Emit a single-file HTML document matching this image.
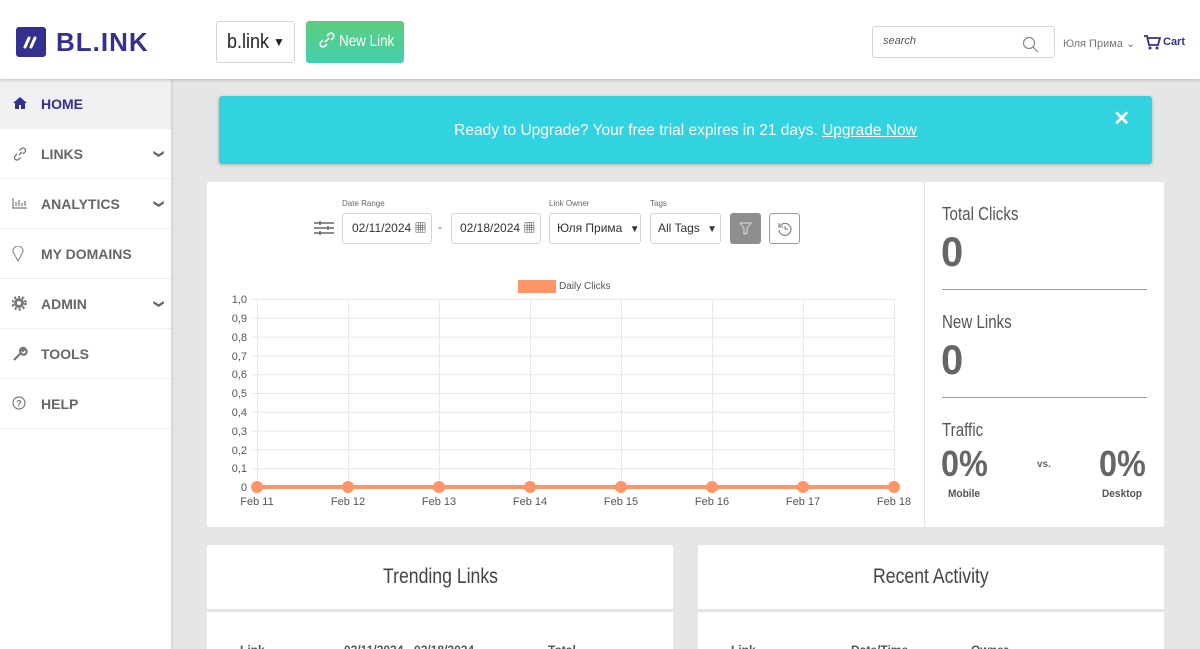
<!DOCTYPE html>
<html><head><meta charset="utf-8"><style>
*{box-sizing:border-box;margin:0;padding:0}
html,body{overflow:hidden}
body{width:1200px;height:649px;background:#e6e6e6;font-family:"Liberation Sans","Noto Sans CJK SC",sans-serif;position:relative;color:#555}
.a{position:absolute}
.n{display:inline-block;transform:scaleX(.84);transform-origin:left;white-space:nowrap}
.nc{display:inline-block;transform:scaleX(.84);transform-origin:center;white-space:nowrap}
.hdr{left:0;top:0;width:1200px;height:79px;background:#fff;box-shadow:0 1px 3px rgba(0,0,0,.2);z-index:2}
.side{left:0;top:79px;width:171px;height:570px;background:#fff;box-shadow:1px 0 3px rgba(0,0,0,.12)}
.it{position:absolute;left:0;width:171px;height:50px;border-bottom:1px solid #eee;font-weight:bold;font-size:14px;color:#666;line-height:50px;padding-left:41px}
.it svg{position:absolute;left:12px;top:17px}
.chev{position:absolute;right:9px;top:0;font-size:10px;color:#666}
.box{background:#fff;border:1px solid #d6d6d6;border-radius:3px;height:31px;font-size:12px;color:#333;line-height:29px;white-space:nowrap}
.lbl{font-size:8px;color:#666}
</style></head><body>
<div class="a hdr">
  <svg class="a" style="left:16px;top:27px" width="30" height="30"><rect width="30" height="30" rx="3" fill="#33308f"/><path d="M9 20l4-9M15 20l4-9" stroke="#fff" stroke-width="3" stroke-linecap="round"/></svg>
  <div class="a" style="left:56px;top:27px;font-size:26px;font-weight:bold;color:#33308f;letter-spacing:1px">BL.INK</div>
  <div class="a box" style="left:216px;top:21px;width:79px;height:42px;line-height:40px;font-size:20px;padding-left:10px;color:#222"><span class="n" style="transform:scaleX(.9)">b.link</span><span style="font-size:12px;position:absolute;left:56px">▼</span></div>
  <div class="a" style="left:306px;top:21px;width:98px;height:42px;border-radius:3px;background:linear-gradient(#5ccd7e,#45cfac);color:#fff;font-size:16px;line-height:42px;padding-left:13px;white-space:nowrap"><svg width="16" height="16" style="vertical-align:-2px"><path d="M6 10l4-4M4 8l-2 2a2.8 2.8 0 004 4l2-2M12 8l2-2a2.8 2.8 0 00-4-4L8 4" fill="none" stroke="#fff" stroke-width="1.6"/></svg> <span class="n">New Link</span></div>
  <div class="a box" style="left:872px;top:26px;width:183px;height:32px;font-size:11px;font-style:italic;color:#555;padding-left:10px">search
    <svg class="a" style="left:149px;top:9px" width="18" height="18"><circle cx="7" cy="7" r="5.5" fill="none" stroke="#888" stroke-width="1.2"/><path d="M11 11l5 5" stroke="#888" stroke-width="1.2"/></svg></div>
  <div class="a" style="left:1063px;top:37px;font-size:11px;color:#777">Юля Прима ⌄</div>
  <svg class="a" style="left:1143px;top:34px" width="18" height="16"><path d="M1 2h3l2 9h9l2-7H5" fill="none" stroke="#33308f" stroke-width="1.8"/><circle cx="7" cy="14" r="1.5" fill="#33308f"/><circle cx="14" cy="14" r="1.5" fill="#33308f"/></svg>
  <div class="a" style="left:1163px;top:36px;font-size:11px;font-weight:bold;color:#33308f">Cart</div>
</div>
<div class="a side">
  <div class="it" style="top:0;background:#f0f0f0;color:#33308f"><svg width="16" height="14"><path d="M8 1L1 7h2v6h4V9h2v4h4V7h2z" fill="#33308f"/></svg>HOME</div>
  <div class="it" style="top:50px"><svg width="16" height="16"><path d="M7 9l3-3M5 8l-2 2a2.5 2.5 0 003.5 3.5l2-2M11 8l2-2a2.5 2.5 0 00-3.5-3.5l-2 2" fill="none" stroke="#777" stroke-width="1.3"/></svg>LINKS<span class="chev">❯</span></div>
  <div class="it" style="top:100px"><svg width="16" height="14"><path d="M1 2v10h14M4 10V6M7 10V4M10 10V7M13 10V5" stroke="#777" stroke-width="1.2" fill="none"/></svg>ANALYTICS<span class="chev">❯</span></div>
  <div class="it" style="top:150px"><svg width="16" height="16"><path d="M6 15C3 9 1 7 1 5a5 5 0 0110 0c0 2-2 4-5 10z" fill="none" stroke="#888" stroke-width="1.1"/></svg>MY DOMAINS</div>
  <div class="it" style="top:200px"><svg width="16" height="16"><circle cx="7" cy="7" r="5" fill="#777"/><circle cx="7" cy="7" r="6.5" fill="none" stroke="#777" stroke-width="2.5" stroke-dasharray="2.2 2"/><circle cx="7" cy="7" r="2" fill="#fff"/></svg>ADMIN<span class="chev">❯</span></div>
  <div class="it" style="top:250px"><svg width="16" height="16"><path d="M2 14l7-7M9 7a3 3 0 104-4l-2 2-1-1 2-2a3 3 0 00-3 5" stroke="#777" stroke-width="2.2" fill="none"/></svg>TOOLS</div>
  <div class="it" style="top:300px"><svg width="16" height="16"><circle cx="7" cy="7" r="6" fill="none" stroke="#777" stroke-width="1.2"/><text x="7" y="10.5" font-size="9" text-anchor="middle" fill="#777" font-family="Liberation Sans">?</text></svg>HELP</div>
</div>
<style>.it .chev{transform:rotate(90deg);display:inline-block;height:50px;line-height:50px}</style>

<div class="a" style="left:219px;top:96px;width:933px;height:68px;background:#31d3e0;border-radius:3px;box-shadow:0 1px 3px rgba(0,0,0,.25);color:#fff;font-size:15.5px;text-align:center;line-height:70px;white-space:nowrap">Ready to Upgrade? Your free trial expires in 21 days. <u>Upgrade Now</u>
  <span class="a" style="right:22px;top:-12px;font-size:20px;font-weight:bold">✕</span></div>

<div class="a" style="left:207px;top:182px;width:957px;height:345px;background:#fff;border-radius:2px"></div>
<div class="a" style="left:924px;top:182px;width:1px;height:345px;background:#e3e3e3"></div>

<svg class="a" style="left:314px;top:219px" width="20" height="18"><path d="M0 4h20M0 9h20M0 14h20" stroke="#666" stroke-width="1.5"/><path d="M6 2v4M14 7v4M6 12v4" stroke="#666" stroke-width="1.5"/></svg>
<div class="a lbl" style="left:342px;top:199px">Date Range</div>
<div class="a box" style="left:342px;top:213px;width:90px;padding-left:9px">02/11/2024 <span style="font-size:12px">▦</span></div>
<div class="a" style="left:438px;top:220px;font-size:12px">-</div>
<div class="a box" style="left:451px;top:213px;width:90px;padding-left:8px">02/18/2024 <span style="font-size:12px">▦</span></div>
<div class="a lbl" style="left:549px;top:199px">Link Owner</div>
<div class="a box" style="left:549px;top:213px;width:92px;padding-left:7px">Юля Прима <span style="font-size:10px;margin-left:4px">▼</span></div>
<div class="a lbl" style="left:650px;top:199px">Tags</div>
<div class="a box" style="left:650px;top:213px;width:71px;padding-left:7px">All Tags <span style="font-size:10px;margin-left:4px">▼</span></div>
<div class="a" style="left:730px;top:213px;width:31px;height:31px;background:#8e8e8e;border-radius:3px"><svg style="margin:9px 0 0 9px" width="13" height="13"><path d="M1 1h11L8 6v5l-3 1V6z" fill="none" stroke="#ddd" stroke-width="1"/></svg></div>
<div class="a" style="left:769px;top:213px;width:31px;height:31px;border:1px solid #999;border-radius:3px"><svg style="margin:7px 0 0 7px" width="16" height="16"><path d="M3 5a6 6 0 11-1 4" fill="none" stroke="#777" stroke-width="1.1"/><path d="M2 2v4h4" fill="none" stroke="#777" stroke-width="1.1"/><path d="M8 5v3h3" fill="none" stroke="#777"/></svg></div>

<div class="a" style="left:518px;top:280px;width:38px;height:13px;background:#ff9566"></div>
<div class="a" style="left:559px;top:281px;font-size:10px;color:#555">Daily Clicks</div>

<svg class="a" style="left:0;top:0" width="1200" height="649" font-family="Liberation Sans" font-size="11" fill="#555">
<g stroke="#e8e8e8" stroke-width="1">
<line x1="252" y1="299.5" x2="894" y2="299.5"/><line x1="252" y1="318.3" x2="894" y2="318.3"/><line x1="252" y1="337.1" x2="894" y2="337.1"/><line x1="252" y1="355.9" x2="894" y2="355.9"/><line x1="252" y1="374.7" x2="894" y2="374.7"/><line x1="252" y1="393.5" x2="894" y2="393.5"/><line x1="252" y1="412.3" x2="894" y2="412.3"/><line x1="252" y1="431.1" x2="894" y2="431.1"/><line x1="252" y1="449.9" x2="894" y2="449.9"/><line x1="252" y1="468.7" x2="894" y2="468.7"/>
<line x1="257.5" y1="299" x2="257.5" y2="492"/><line x1="348.5" y1="299" x2="348.5" y2="492"/><line x1="439.5" y1="299" x2="439.5" y2="492"/><line x1="530.5" y1="299" x2="530.5" y2="492"/><line x1="621.5" y1="299" x2="621.5" y2="492"/><line x1="712.5" y1="299" x2="712.5" y2="492"/><line x1="803.5" y1="299" x2="803.5" y2="492"/><line x1="894.5" y1="299" x2="894.5" y2="492"/>
</g>
<g text-anchor="end"><text x="247" y="303">1,0</text><text x="247" y="322">0,9</text><text x="247" y="341">0,8</text><text x="247" y="360">0,7</text><text x="247" y="378">0,6</text><text x="247" y="397">0,5</text><text x="247" y="416">0,4</text><text x="247" y="435">0,3</text><text x="247" y="454">0,2</text><text x="247" y="472">0,1</text><text x="247" y="491">0</text></g>
<line x1="257" y1="487" x2="894" y2="487" stroke="#ff9566" stroke-width="4"/>
<g fill="#ff9566"><circle cx="257" cy="487" r="6"/><circle cx="348" cy="487" r="6"/><circle cx="439" cy="487" r="6"/><circle cx="530" cy="487" r="6"/><circle cx="621" cy="487" r="6"/><circle cx="712" cy="487" r="6"/><circle cx="803" cy="487" r="6"/><circle cx="894" cy="487" r="6"/></g>
<g text-anchor="middle"><text x="257" y="505">Feb 11</text><text x="348" y="505">Feb 12</text><text x="439" y="505">Feb 13</text><text x="530" y="505">Feb 14</text><text x="621" y="505">Feb 15</text><text x="712" y="505">Feb 16</text><text x="803" y="505">Feb 17</text><text x="894" y="505">Feb 18</text></g>
</svg>

<div class="a" style="left:942px;top:204px;font-size:18px;color:#555"><span class="n">Total Clicks</span></div>
<div class="a" style="left:941px;top:228px;font-size:42px;font-weight:bold;color:#666"><span class="n" style="transform:scaleX(.95)">0</span></div>
<div class="a" style="left:942px;top:289px;width:205px;height:1px;background:#999"></div>
<div class="a" style="left:942px;top:312px;font-size:18px;color:#555"><span class="n">New Links</span></div>
<div class="a" style="left:941px;top:336px;font-size:42px;font-weight:bold;color:#666"><span class="n" style="transform:scaleX(.95)">0</span></div>
<div class="a" style="left:942px;top:397px;width:205px;height:1px;background:#999"></div>
<div class="a" style="left:942px;top:420px;font-size:18px;color:#555"><span class="n">Traffic</span></div>
<div class="a" style="left:941px;top:443px;font-size:36px;font-weight:bold;color:#666"><span class="n" style="transform:scaleX(.9)">0%</span></div>
<div class="a" style="left:1037px;top:459px;font-size:10px;font-weight:bold;color:#666">vs.</div>
<div class="a" style="left:1099px;top:443px;font-size:36px;font-weight:bold;color:#666"><span class="n" style="transform:scaleX(.9)">0%</span></div>
<div class="a" style="left:948px;top:488px;font-size:11px;font-weight:bold;color:#555"><span class="n" style="transform:scaleX(.92)">Mobile</span></div>
<div class="a" style="left:1102px;top:488px;font-size:11px;font-weight:bold;color:#555"><span class="n" style="transform:scaleX(.92)">Desktop</span></div>

<div class="a" style="left:207px;top:545px;width:466px;height:110px;background:#fff;border-radius:2px"></div>
<div class="a" style="left:207px;top:609px;width:466px;height:3px;background:#e4e4e4"></div>
<div class="a" style="left:207px;top:565px;width:466px;text-align:center;font-size:21px;color:#444"><span class="nc">Trending Links</span></div>
<div class="a" style="left:698px;top:545px;width:466px;height:110px;background:#fff;border-radius:2px"></div>
<div class="a" style="left:698px;top:609px;width:466px;height:3px;background:#e4e4e4"></div>
<div class="a" style="left:698px;top:565px;width:466px;text-align:center;font-size:21px;color:#444"><span class="nc">Recent Activity</span></div>
<div class="a" style="left:240px;top:643px;font-size:12px;font-weight:bold;color:#555">Link</div>
<div class="a" style="left:344px;top:643px;font-size:12px;font-weight:bold;color:#555">02/11/2024 - 02/18/2024</div>
<div class="a" style="left:548px;top:643px;font-size:12px;font-weight:bold;color:#555">Total</div>
<div class="a" style="left:731px;top:643px;font-size:12px;font-weight:bold;color:#555">Link</div>
<div class="a" style="left:851px;top:643px;font-size:12px;font-weight:bold;color:#555">Date/Time</div>
<div class="a" style="left:971px;top:643px;font-size:12px;font-weight:bold;color:#555">Owner</div>
</body></html>
